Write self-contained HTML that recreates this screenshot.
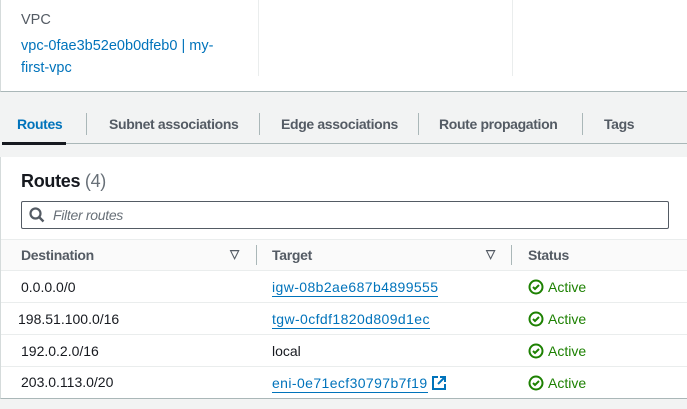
<!DOCTYPE html>
<html><head><style>
*{margin:0;padding:0;box-sizing:border-box}
body{width:687px;height:409px;overflow:hidden;background:#f2f3f3;font-family:"Liberation Sans",sans-serif;font-size:14px;color:#16191f;position:relative}
.abs{position:absolute}
.top{left:0;top:0;width:687px;height:92px;background:#fff;border-left:1px solid #d5dbdb;border-bottom:1px solid #aab7b8}
.vl{width:1px;background:#eaeded}
.tab{top:116px;font-weight:bold;color:#545b64;font-size:14px;letter-spacing:-0.35px}
.tdiv{top:113px;width:1px;height:22px;background:#aab7b8}
.card{left:0;top:157px;width:687px;height:242px;background:#fff;border-left:1px solid #d5dbdb;border-bottom:1px solid #aab7b8}
.row{left:1px;width:686px;height:1px;background:#eaeded}
.cell{font-size:14px}
.act{color:#1d8102}
.lnk{color:#0073bb;border-bottom:1px solid #0073bb;line-height:17px;letter-spacing:0.4px}
.hd{font-weight:bold;color:#545b64;letter-spacing:-0.3px}
.tri{color:#545b64;font-size:12px;font-weight:bold}
</style></head><body>
<div class="abs top"></div>
<div class="abs" style="left:21px;top:12px;color:#545b64;font-size:14.5px">VPC</div>
<div class="abs" style="left:21px;top:35px;line-height:22px;color:#0073bb;width:215px;font-size:14.5px">vpc-0fae3b52e0b0dfeb0 | my-<br>first-vpc</div>
<div class="abs vl" style="left:258px;top:0;height:76px"></div>
<div class="abs vl" style="left:512px;top:0;height:76px"></div>

<div class="abs tab" style="left:17px;color:#0073bb">Routes</div>
<div class="abs tdiv" style="left:86px"></div>
<div class="abs tab" style="left:109px">Subnet associations</div>
<div class="abs tdiv" style="left:259px"></div>
<div class="abs tab" style="left:281px">Edge associations</div>
<div class="abs tdiv" style="left:418px"></div>
<div class="abs tab" style="left:439px">Route propagation</div>
<div class="abs tdiv" style="left:582px"></div>
<div class="abs tab" style="left:604px">Tags</div>
<div class="abs" style="left:2px;top:143px;width:685px;height:1px;background:#aab7b8"></div>
<div class="abs" style="left:2px;top:142px;width:64px;height:3px;background:#16191f"></div>

<div class="abs card"></div>
<div class="abs" style="left:21px;top:171px;font-size:18px;font-weight:bold;letter-spacing:-0.3px">Routes <span style="font-weight:normal;color:#687078">(4)</span></div>
<div class="abs" style="left:21px;top:201px;width:648px;height:28px;border:1px solid #545b64;border-radius:2px;background:#fff"></div>
<svg class="abs" style="left:29px;top:207px" width="16" height="16" viewBox="0 0 16 16"><circle cx="6.5" cy="6.5" r="5" fill="none" stroke="#545b64" stroke-width="2.2"/><path d="M10 10l4.5 4.5" stroke="#545b64" stroke-width="2.4"/></svg>
<div class="abs" style="left:53px;top:207px;font-style:italic;color:#687078;font-size:14px;letter-spacing:-0.3px">Filter routes</div>
<div class="abs" style="left:1px;top:239px;width:686px;height:31px;background:#fafafa;border-top:1px solid #eaeded"></div>
<div class="abs hd" style="left:21px;top:247px">Destination</div>
<div class="abs tri" style="left:230px;top:247px">▽</div>
<div class="abs" style="left:256px;top:245px;width:1px;height:20px;background:#aab7b8"></div>
<div class="abs hd" style="left:272px;top:247px">Target</div>
<div class="abs tri" style="left:486px;top:247px">▽</div>
<div class="abs" style="left:511px;top:245px;width:1px;height:20px;background:#aab7b8"></div>
<div class="abs hd" style="left:528px;top:247px">Status</div>
<div class="abs row" style="top:270px"></div>
<div class="abs row" style="top:302px"></div>
<div class="abs row" style="top:334px"></div>
<div class="abs row" style="top:366px"></div>

<div class="abs cell" style="left:21px;top:279px">0.0.0.0/0</div>
<div class="abs cell lnk" style="left:272px;top:279px">igw-08b2ae687b4899555</div>
<div class="abs cell" style="left:18px;top:311px">198.51.100.0/16</div>
<div class="abs cell lnk" style="left:272px;top:311px">tgw-0cfdf1820d809d1ec</div>
<div class="abs cell" style="left:21px;top:343px">192.0.2.0/16</div>
<div class="abs cell" style="left:272px;top:343px">local</div>
<div class="abs cell" style="left:21px;top:374px">203.0.113.0/20</div>
<div class="abs cell lnk" style="left:272px;top:375px">eni-0e71ecf30797b7f19</div>
<svg class="abs" style="left:432px;top:376px" width="14" height="14" viewBox="0 0 14 14"><path d="M6 1H1v12h12V8" fill="none" stroke="#0073bb" stroke-width="2"/><path d="M8 1h5v5M13 1L6 8" fill="none" stroke="#0073bb" stroke-width="2"/></svg>

<svg class="abs" style="left:528px;top:279px" width="16" height="16" viewBox="0 0 16 16"><circle cx="8" cy="8" r="6.5" fill="none" stroke="#1d8102" stroke-width="2"/><path d="M5 8l2 2 4-4" fill="none" stroke="#1d8102" stroke-width="2"/></svg>
<div class="abs act" style="left:548px;top:279px">Active</div>
<svg class="abs" style="left:528px;top:311px" width="16" height="16" viewBox="0 0 16 16"><circle cx="8" cy="8" r="6.5" fill="none" stroke="#1d8102" stroke-width="2"/><path d="M5 8l2 2 4-4" fill="none" stroke="#1d8102" stroke-width="2"/></svg>
<div class="abs act" style="left:548px;top:311px">Active</div>
<svg class="abs" style="left:528px;top:343px" width="16" height="16" viewBox="0 0 16 16"><circle cx="8" cy="8" r="6.5" fill="none" stroke="#1d8102" stroke-width="2"/><path d="M5 8l2 2 4-4" fill="none" stroke="#1d8102" stroke-width="2"/></svg>
<div class="abs act" style="left:548px;top:343px">Active</div>
<svg class="abs" style="left:528px;top:375px" width="16" height="16" viewBox="0 0 16 16"><circle cx="8" cy="8" r="6.5" fill="none" stroke="#1d8102" stroke-width="2"/><path d="M5 8l2 2 4-4" fill="none" stroke="#1d8102" stroke-width="2"/></svg>
<div class="abs act" style="left:548px;top:375px">Active</div>
</body></html>
